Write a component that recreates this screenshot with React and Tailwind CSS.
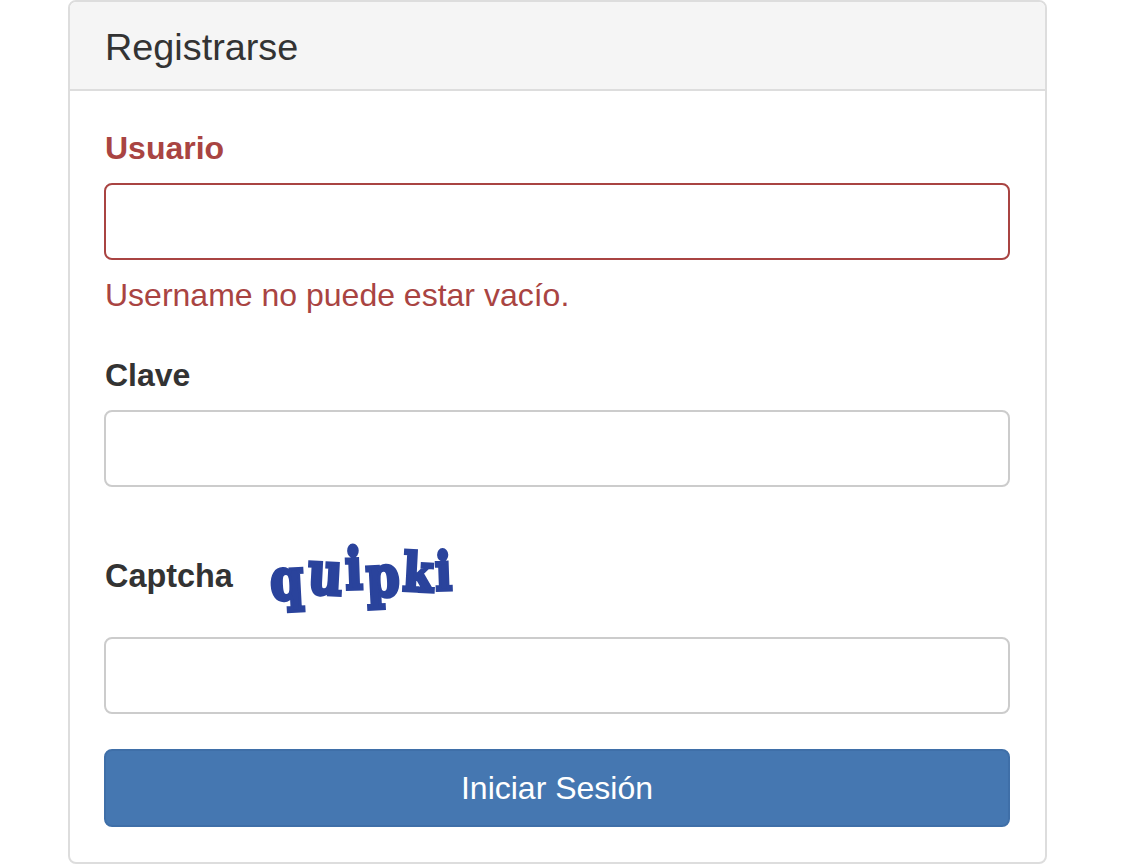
const inputClass = 'block w-full h-[77px] rounded-lg border-2 bg-white px-6 text-[32px] text-[#555555] outline-none';

const captchaLetters = [
  { ch: 'q', box: 'w-[41px]', cls: 'text-[48px] -rotate-3 scale-y-[1.2] mt-[6px]' },
  { ch: 'u', box: 'w-[38px]', cls: 'text-[48px] rotate-3 scale-y-[1.25] mt-[-6px]' },
  { ch: 'i', box: 'w-[17px]', cls: 'text-[46px] -rotate-2 scale-y-[1.25] mt-[-14px]' },
  { ch: 'p', box: 'w-[41px]', cls: 'text-[48px] -rotate-3 scale-y-[1.2] mt-[0px]' },
  { ch: 'k', box: 'w-[31px]', cls: 'text-[44px] rotate-3 scale-y-[1.2] mt-[-6px]' },
  { ch: 'i', box: 'w-[19px]', cls: 'text-[44px] -rotate-2 scale-y-[1.2] mt-[-8px]' },
];

function CaptchaImage() {
  return (
    <div className="ml-[33px] flex h-[80px] items-center font-['DejaVu_Serif',serif] font-bold leading-none text-[#2a439c] [-webkit-text-stroke:3px_#2a439c]">
      {captchaLetters.map((l, i) => (
        <div key={i} className={`flex h-[80px] items-center justify-center ${l.box}`}>
          <span className={`block ${l.cls}`}>{l.ch}</span>
        </div>
      ))}
    </div>
  );
}

export default function App() {
  return (
    <div className="h-[867px] overflow-hidden bg-white font-['Liberation_Sans',Arial,sans-serif]">
      <div className="ml-[68px] h-[864px] w-[979px] overflow-hidden rounded-lg border-2 border-[#dddddd] bg-white">
        <div className="flex h-[89px] items-center border-b-2 border-[#dddddd] bg-[#f5f5f5] pl-[35px] pt-[4px] text-[37.8px] text-[#333333]">
          Registrarse
        </div>

        <form className="pl-[34px] pr-[35px] pt-[34px]">
          <label className="block h-[46px] pl-[1px] text-[32px] font-bold leading-[46px] text-[#a94442]">Usuario</label>
          <input className={`${inputClass} mt-[12px] border-[#a94442]`} type="text" />
          <p className="mt-[12px] h-[46px] pl-[1px] text-[32px] leading-[46px] text-[#a94442]">Username no puede estar vacío.</p>

          <label className="mt-[34px] block h-[46px] pl-[1px] text-[32px] font-bold leading-[46px] text-[#333333]">Clave</label>
          <input className={`${inputClass} mt-[12px] border-[#cccccc]`} type="text" />

          <div className="mt-[49px] flex h-[80px] items-center pl-[1px]">
            <label className="text-[32.4px] font-bold leading-[46px] text-[#333333]">Captcha</label>
            <CaptchaImage />
          </div>
          <input className={`${inputClass} mt-[21px] border-[#cccccc]`} type="text" />

          <button type="button" className="mt-[35px] block h-[78px] w-full rounded-lg border-2 border-[#3f6fa8] bg-[#4577b1] text-center text-[32px] text-white">
            Iniciar Sesión
          </button>
        </form>
      </div>
    </div>
  );
}
